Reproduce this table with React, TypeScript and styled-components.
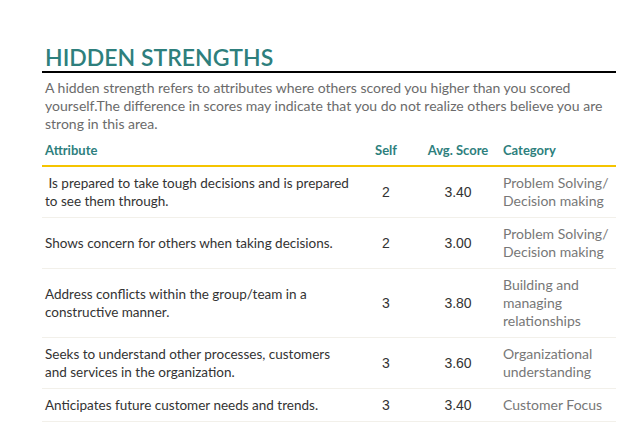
import React from "react";
import styled, { createGlobalStyle } from "styled-components";

const Global = createGlobalStyle`
  html, body { margin: 0; padding: 0; background: #ffffff; }
  body { font-family: Lato, "Open Sans", sans-serif; }
`;

const Page = styled.div`
  padding: 41px 12px 0 42px;
  width: 574px;
`;

const Title = styled.h1`
  margin: 0;
  padding: 3px 0 0 3px;
  font-family: Lato, sans-serif;
  font-weight: 600;
  font-size: 23px;
  line-height: 27px;
  color: #2e7f7d;
  border-bottom: 2px solid #000;
`;

const Intro = styled.p`
  margin: 6px 0 0;
  padding: 0 3px;
  font-size: 14px;
  line-height: 18px;
  color: #6b6b6b;
`;

const Table = styled.div`
  margin-top: 5px;
  display: grid;
  grid-template-columns: 330px 28px 100px 1fr;
`;

const HeadCell = styled.div<{ $align?: string; $pl?: number }>`
  font-weight: 700;
  font-size: 13px;
  line-height: 18px;
  color: #2e7f7d;
  padding: 3px 0 6px ${(p) => p.$pl ?? 0}px;
  text-align: ${(p) => p.$align || "left"};
  border-bottom: 2px solid #f5c400;
`;

const Cell = styled.div<{ $align?: string; $pl?: number; $pr?: number; $kind?: string }>`
  display: flex;
  align-items: center;
  justify-content: ${(p) => (p.$align === "center" ? "center" : "flex-start")};
  padding: 7px ${(p) => p.$pr ?? 0}px 7px ${(p) => p.$pl ?? 0}px;
  border-bottom: 1px solid #f2f0ea;
  line-height: 18px;
  color: ${(p) => (p.$kind === "cat" ? "#777777" : "#333333")};
  font-family: ${(p) =>
    p.$kind === "num" ? '"Liberation Sans", Arial, sans-serif' : "Lato, sans-serif"};
  font-size: ${(p) => (p.$kind === "num" ? "14px" : p.$kind === "cat" ? "14px" : "13.5px")};
`;

const rows = [
  { a: "\u00a0Is prepared to take tough decisions and is prepared to see them through.", s: "2", v: "3.40", c: "Problem Solving/ Decision making" },
  { a: "Shows concern for others when taking decisions.", s: "2", v: "3.00", c: "Problem Solving/ Decision making" },
  { a: "Address conflicts within the group/team in a constructive manner.", s: "3", v: "3.80", c: "Building and managing relationships" },
  { a: "Seeks to understand other processes, customers and services in the organization.", s: "3", v: "3.60", c: "Organizational understanding" },
  { a: "Anticipates future customer needs and trends.", s: "3", v: "3.40", c: "Customer Focus" },
];

export default function App() {
  return (
    <>
      <Global />
      <Page>
        <Title>HIDDEN STRENGTHS</Title>
        <Intro>
          A hidden strength refers to attributes where others scored you higher than you scored
          yourself.The difference in scores may indicate that you do not realize others believe you are
          strong in this area.
        </Intro>
        <Table>
          <HeadCell $pl={3}>Attribute</HeadCell>
          <HeadCell $align="center">Self</HeadCell>
          <HeadCell $align="center" $pl={16}>Avg. Score</HeadCell>
          <HeadCell $pl={3}>Category</HeadCell>
          {rows.map((r, i) => (
            <React.Fragment key={i}>
              <Cell $pl={3} $pr={20}>{r.a}</Cell>
              <Cell $align="center" $kind="num">{r.s}</Cell>
              <Cell $align="center" $pl={16} $kind="num">{r.v}</Cell>
              <Cell $pl={3} $kind="cat">{r.c}</Cell>
            </React.Fragment>
          ))}
        </Table>
      </Page>
    </>
  );
}
